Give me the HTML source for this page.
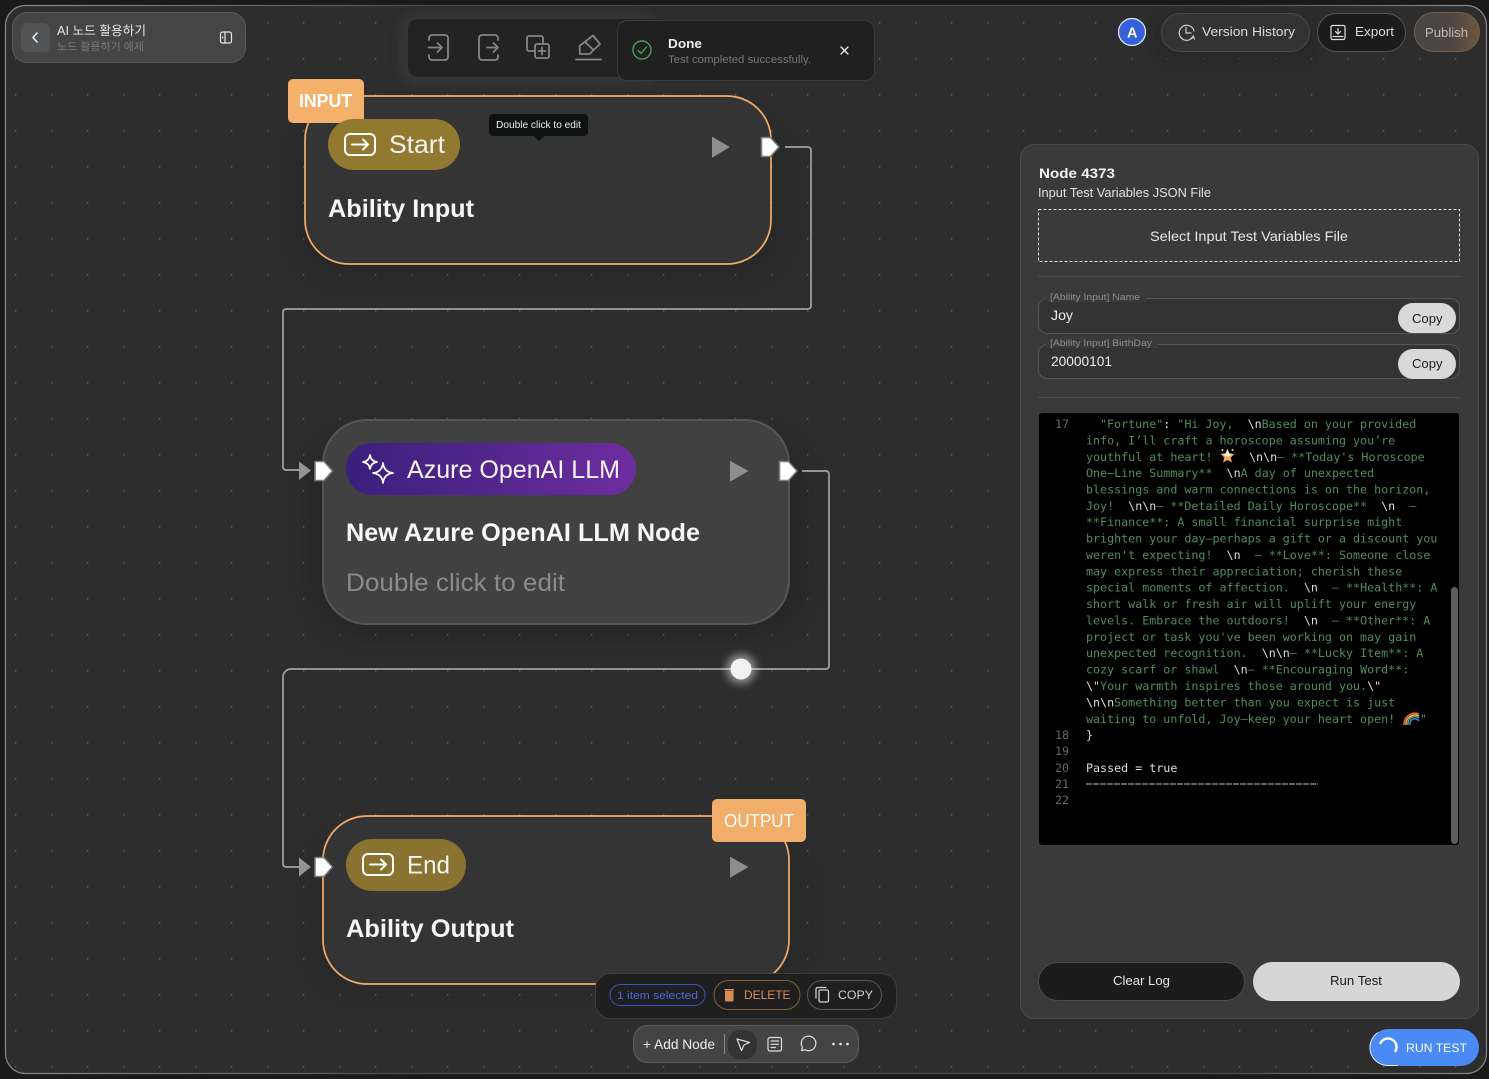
<!DOCTYPE html>
<html><head><meta charset="utf-8"><title>AI 노드 활용하기</title>
<style>
html,body{margin:0;padding:0;background:#1a1a1a;width:1489px;height:1079px;overflow:hidden}
svg{display:block}
text{font-family:"Liberation Sans","Noto Sans CJK KR",sans-serif;white-space:pre}
.m{font-family:"DejaVu Sans Mono","Liberation Mono",monospace;font-size:11.68px;fill:#4f8d5a}
.w{fill:#dedede}
.n{font-family:"DejaVu Sans Mono","Liberation Mono",monospace;font-size:11.68px;fill:#666}
.ic{fill:none;stroke-linecap:round;stroke-linejoin:round}
</style></head><body>
<svg width="1489" height="1079" viewBox="0 0 1489 1079" xmlns="http://www.w3.org/2000/svg">
<defs>
<pattern id="dots" x="15" y="22" width="36" height="36" patternUnits="userSpaceOnUse"><rect x="0" y="0" width="1.4" height="1.4" fill="#626262"/></pattern>
<linearGradient id="fr" x1="0" y1="0" x2="1" y2="0"><stop offset="0" stop-color="#8a8a8a"/><stop offset=".3" stop-color="#484848"/><stop offset=".8" stop-color="#484848"/><stop offset="1" stop-color="#8a8a8a"/></linearGradient>
<linearGradient id="pur" x1="0" y1="0" x2="1" y2="0"><stop offset="0" stop-color="#3a1f7c"/><stop offset="1" stop-color="#6f2d9f"/></linearGradient>
<linearGradient id="pub" x1="0" y1="0" x2="1" y2="0"><stop offset="0" stop-color="#464646"/><stop offset=".55" stop-color="#4d4640"/><stop offset="1" stop-color="#6e5640"/></linearGradient>
<filter id="b10" x="-20%" y="-20%" width="140%" height="140%"><feGaussianBlur stdDeviation="10"/></filter>
<filter id="b4" x="-100%" y="-100%" width="300%" height="300%"><feGaussianBlur stdDeviation="4"/></filter>
</defs>

<!-- frame -->
<rect x="5.5" y="5.5" width="1481" height="1068" rx="20" fill="#2d2d2d" stroke="url(#fr)" stroke-width="1.2"/>
<rect x="6" y="6" width="1480" height="1067" rx="20" fill="url(#dots)"/>

<!-- shadows -->
<rect x="292" y="115" width="495" height="165" rx="50" fill="#000" opacity=".1" filter="url(#b10)"/>
<rect x="308" y="432" width="500" height="205" rx="50" fill="#000" opacity=".14" filter="url(#b10)"/>
<rect x="308" y="830" width="500" height="165" rx="50" fill="#000" opacity=".08" filter="url(#b10)"/>
<rect x="398" y="12" width="260" height="74" rx="20" fill="#383838" opacity=".7" filter="url(#b4)"/>
<rect x="1152" y="10" width="168" height="54" rx="26" fill="#262626" opacity=".6" filter="url(#b4)"/>

<!-- connectors -->
<g fill="none" stroke="#a2a2a2" stroke-width="1.700">
<path d="M785 147H808a3 3 0 0 1 3 3V306a3 3 0 0 1-3 3H286a3 3 0 0 0-3 3V467a3 3 0 0 0 3 3H300"/>
<path d="M802 471H826a3 3 0 0 1 3 3V666a3 3 0 0 1-3 3H291a8 8 0 0 0-8 8V864a3 3 0 0 0 3 3H300"/>
</g>
<path d="M299 461.500L311 470.500L299 480Z" fill="#949494"/>
<path d="M299 857.500L311 867L299 876.500Z" fill="#949494"/>

<!-- node 1 -->
<rect x="305" y="96" width="466" height="168" rx="44" fill="#343434" stroke="#f2ad69" stroke-width="1.700"/>
<rect x="288" y="79" width="76" height="44" rx="5" fill="#f3b16c"/>
<text x="299" y="107" font-size="18" font-weight="700" fill="#fff" textLength="53" lengthAdjust="spacingAndGlyphs">INPUT</text>
<rect x="328" y="119" width="132" height="51" rx="25.5" fill="#917a30"/>
<g class="ic" stroke="#fff" stroke-width="2"><rect x="345" y="134" width="30" height="21" rx="5"/><path d="M352 144.500H368M363 139.500l5 5-5 5"/></g>
<text x="389" y="153" font-size="25" fill="#f4f4f4" textLength="56" lengthAdjust="spacingAndGlyphs">Start</text>
<text x="328" y="217" font-size="25" font-weight="700" fill="#f5f5f5" textLength="146" lengthAdjust="spacingAndGlyphs">Ability Input</text>
<path d="M712.500 137.500L729 147L712.500 157Z" fill="#8e8e8e" stroke="#8e8e8e" stroke-linejoin="round"/>
<path d="M761.500 137.500H770.500L779 147L770.500 156.500H761.500Z" fill="#fff" stroke="#7a7a7a" stroke-width="1.600" stroke-linejoin="round"/>
<rect x="489" y="114" width="99" height="22" rx="4" fill="#0e1210"/>
<path d="M534 136H544L539 141Z" fill="#0e1210"/>
<text x="496" y="128" font-size="9.800" fill="#eee" textLength="85" lengthAdjust="spacingAndGlyphs">Double click to edit</text>

<!-- node 2 -->
<rect x="323" y="420" width="466" height="204" rx="44" fill="#414141" stroke="#565656" stroke-width="2"/>
<rect x="346" y="443" width="290" height="52" rx="26" fill="url(#pur)"/>
<g class="ic" stroke="#fff" stroke-width="1.700" stroke-linejoin="miter">
<path d="M370 455q.8 6 7 7q-6.200 1-7 7q-.8-6-7-7q6.200-1 7-7Z"/>
<path d="M383 463q1 9 10 10q-9 1-10 10q-1-9-10-10q9-1 10-10Z"/></g>
<text x="407" y="478" font-size="25" fill="#f6f6f6" textLength="213" lengthAdjust="spacingAndGlyphs">Azure OpenAI LLM</text>
<text x="346" y="541" font-size="25" font-weight="700" fill="#f8f8f8" textLength="354" lengthAdjust="spacingAndGlyphs">New Azure OpenAI LLM Node</text>
<text x="346" y="591" font-size="25" fill="#8b8b8b" textLength="219" lengthAdjust="spacingAndGlyphs">Double click to edit</text>
<path d="M730.500 461.500L747.500 471L730.500 481Z" fill="#8e8e8e" stroke="#8e8e8e" stroke-linejoin="round"/>
<path d="M315 461.500H324L332.500 471L324 480.500H315Z" fill="#fff" stroke="#7a7a7a" stroke-width="1.600" stroke-linejoin="round"/>
<path d="M779.500 461.500H788.500L797 471L788.500 480.500H779.500Z" fill="#fff" stroke="#7a7a7a" stroke-width="1.600" stroke-linejoin="round"/>
<circle cx="741" cy="669" r="15" fill="#fff" opacity=".45" filter="url(#b4)"/>
<circle cx="741" cy="669" r="10.500" fill="#f2f2f2"/>

<!-- node 3 -->
<rect x="323" y="816" width="466" height="168" rx="44" fill="#343434" stroke="#f2ad69" stroke-width="1.700"/>
<rect x="712" y="799" width="94" height="43" rx="5" fill="#f0ae6a"/>
<text x="724" y="827" font-size="18" fill="#fff" textLength="70" lengthAdjust="spacingAndGlyphs">OUTPUT</text>
<rect x="346" y="839" width="120" height="52" rx="26" fill="#8a7330"/>
<g class="ic" stroke="#fff" stroke-width="2"><rect x="363" y="854" width="30" height="21" rx="5"/><path d="M370 864.500H386M381 859.500l5 5-5 5"/></g>
<text x="407" y="873.500" font-size="25" fill="#f4f4f4" textLength="43" lengthAdjust="spacingAndGlyphs">End</text>
<text x="346" y="937" font-size="25" font-weight="700" fill="#f5f5f5" textLength="168" lengthAdjust="spacingAndGlyphs">Ability Output</text>
<path d="M730.500 857.500L747.500 867L730.500 877Z" fill="#8e8e8e" stroke="#8e8e8e" stroke-linejoin="round"/>
<path d="M315 857.500H324L332.500 867L324 876.500H315Z" fill="#fff" stroke="#7a7a7a" stroke-width="1.600" stroke-linejoin="round"/>

<!-- top-left card -->
<rect x="12.500" y="12.500" width="233" height="50" rx="15" fill="#454545" stroke="#5a5a5a"/>
<rect x="21" y="23" width="29" height="29" rx="6" fill="#525355"/>
<path class="ic" d="M37 33L33 37.500L37 42" stroke="#f0f0f0" stroke-width="1.500"/>
<text x="57" y="35" font-size="12.500" fill="#e6e6e6" textLength="89" lengthAdjust="spacingAndGlyphs">AI 노드 활용하기</text>
<text x="57" y="50" font-size="10.500" fill="#7a7a7a" textLength="87" lengthAdjust="spacingAndGlyphs">노드 활용하기 예제</text>
<g class="ic" stroke="#e6e6e6" stroke-width="1.200"><rect x="220.500" y="32" width="11" height="11" rx="2"/><path d="M225 32V43"/></g>
<rect x="222" y="36.500" width="1.200" height="2" fill="#e6e6e6"/>

<!-- toolbar -->
<rect x="408" y="19" width="260" height="58" rx="10" fill="#232323"/>
<g class="ic" stroke="#858585" stroke-width="1.800">
<path d="M429 40V38a3 3 0 0 1 3-3H445a3 3 0 0 1 3 3V57a3 3 0 0 1-3 3H432a3 3 0 0 1-3-3V55"/><path d="M428.500 47.500H442M437.500 43l4.500 4.500-4.500 4.500"/>
<path d="M498 40V38a3 3 0 0 0-3-3H482a3 3 0 0 0-3 3V57a3 3 0 0 0 3 3H495a3 3 0 0 0 3-3V55"/><path d="M487 47.500H498M493.500 43l4.500 4.500-4.500 4.500"/>
<path d="M534 51H529a2 2 0 0 1-2-2V38a2 2 0 0 1 2-2H541a2 2 0 0 1 2 2V43"/><rect x="535" y="44" width="14" height="14" rx="2"/><path d="M542 47.500V54.500M538.500 51H545.500"/>
<path d="M579.500 46L593 35.500L600 44L589.500 54H580Z"/><path d="M585 42L593.500 50"/><path d="M576 59.500H601"/>
</g>

<!-- toast -->
<rect x="617.500" y="20.500" width="257" height="60" rx="10" fill="#202020" stroke="#3b3b3b"/>
<circle cx="642" cy="50" r="9" fill="none" stroke="#4a9f5c" stroke-width="1.400"/>
<path class="ic" d="M638 50.500l3 3 5.500-6.500" stroke="#4a9f5c" stroke-width="1.300"/>
<text x="668" y="48" font-size="12.500" font-weight="700" fill="#eee" textLength="34" lengthAdjust="spacingAndGlyphs">Done</text>
<text x="668" y="63" font-size="11" fill="#777" textLength="143" lengthAdjust="spacingAndGlyphs">Test completed successfully.</text>
<path class="ic" d="M841 47l7 7M848 47l-7 7" stroke="#eee" stroke-width="1.300"/>

<!-- top right -->
<circle cx="1132" cy="32" r="13.500" fill="#3560d8" stroke="#e8ebf5" stroke-width="1.200"/>
<text x="1127" y="37.500" font-size="14.500" font-weight="700" fill="#fff" textLength="10.500" lengthAdjust="spacingAndGlyphs">A</text>
<rect x="1161.500" y="13.500" width="148" height="38" rx="19" fill="#333" stroke="#4b4b4b"/>
<g class="ic" stroke="#cfcfcf" stroke-width="1.200"><path d="M1193.500 36a7.500 7.500 0 1 1 .5-5"/><path d="M1186 27.500V33H1191M1191 38.500l2.500-2.500 .8 3"/></g>
<text x="1202" y="36" font-size="12.500" fill="#ddd" textLength="93" lengthAdjust="spacingAndGlyphs">Version History</text>
<rect x="1317.500" y="13.500" width="88" height="38" rx="19" fill="#1c1c1c" stroke="#555"/>
<g class="ic" stroke="#ddd" stroke-width="1.200"><rect x="1331" y="25.500" width="14" height="14" rx="1.500"/><path d="M1338 28.500V33.500M1335.500 31.500l2.500 2.500 2.500-2.500M1333 36.500H1343"/></g>
<text x="1355" y="36" font-size="12.500" fill="#ddd" textLength="39" lengthAdjust="spacingAndGlyphs">Export</text>
<rect x="1414.500" y="12.500" width="65" height="39" rx="19.500" fill="url(#pub)" stroke="#7a6048"/>
<text x="1425" y="37" font-size="13" fill="#bdbdbd" textLength="43" lengthAdjust="spacingAndGlyphs">Publish</text>

<!-- panel -->
<rect x="1020.500" y="144.500" width="458" height="874" rx="14" fill="#3a3a3a" stroke="#4b4b4b"/>
<text x="1039" y="178" font-size="14" font-weight="700" fill="#f2f2f2" textLength="76" lengthAdjust="spacingAndGlyphs">Node 4373</text>
<text x="1038" y="197" font-size="12.500" fill="#e2e2e2" textLength="173" lengthAdjust="spacingAndGlyphs">Input Test Variables JSON File</text>
<rect x="1038.500" y="209.500" width="421" height="52" fill="none" stroke="#e0e0e0" stroke-dasharray="3 2"/>
<text x="1150" y="241" font-size="14" fill="#e8e8e8" textLength="198" lengthAdjust="spacingAndGlyphs">Select Input Test Variables File</text>
<path d="M1038 276.500H1460M1038 397.500H1460" stroke="#4c4c4c"/>

<rect x="1038.500" y="298.500" width="421" height="35" rx="9" fill="#333" stroke="#555"/>
<rect x="1046" y="294" width="100" height="8" fill="#3a3a3a"/>
<text x="1050" y="300" font-size="9.500" fill="#8f8f8f" textLength="90" lengthAdjust="spacingAndGlyphs">[Ability Input] Name</text>
<text x="1051" y="320" font-size="14" fill="#eee" textLength="22" lengthAdjust="spacingAndGlyphs">Joy</text>
<rect x="1398" y="303" width="58" height="30" rx="15" fill="#d9d9d9"/>
<text x="1412" y="323" font-size="13" fill="#1c1c1c" textLength="30.500" lengthAdjust="spacingAndGlyphs">Copy</text>

<rect x="1038.500" y="344.500" width="421" height="34" rx="9" fill="#333" stroke="#555"/>
<rect x="1046" y="340" width="112" height="8" fill="#3a3a3a"/>
<text x="1050" y="346" font-size="9.500" fill="#8f8f8f" textLength="102" lengthAdjust="spacingAndGlyphs">[Ability Input] BirthDay</text>
<text x="1051" y="366" font-size="14" fill="#eee" textLength="61" lengthAdjust="spacingAndGlyphs">20000101</text>
<rect x="1398" y="349" width="58" height="30" rx="15" fill="#d9d9d9"/>
<text x="1412" y="368" font-size="13" fill="#1c1c1c" textLength="30.500" lengthAdjust="spacingAndGlyphs">Copy</text>

<!-- log -->
<rect x="1039" y="413" width="420" height="432" rx="3" fill="#000"/>
<text class="n" x="1055" y="428">17</text>
<text class="m" x="1100" y="428">"Fortune"<tspan class="w">:</tspan> "Hi Joy,  <tspan class="w">\n</tspan>Based on your provided</text>
<text class="m" x="1086" y="444.400">info, I’ll craft a horoscope assuming you’re</text>
<text class="m" x="1086" y="460.800">youthful at heart!</text>
<g transform="translate(1227.500 456)"><path d="M0-7L2-2.500L7-2L3.200 1.500L4.500 6.500L0 4L-4.500 6.500L-3.200 1.500L-7-2L-2-2.500Z" fill="#f4a55a"/><path d="M0-7L2-2.500L5-2.200L2 .5H-2L-5-2.200L-2-2.500Z" fill="#f5e6c8"/><circle cx="-5" cy="-6" r="1" fill="#f7d9a8"/><circle cx="5" cy="-6" r="1" fill="#f7d9a8"/></g>
<text class="m" x="1249" y="460.800"><tspan class="w">\n\n</tspan>— **Today's Horoscope</text>
<text class="m" x="1086" y="477.200">One—Line Summary**  <tspan class="w">\n</tspan>A day of unexpected</text>
<text class="m" x="1086" y="493.600">blessings and warm connections is on the horizon,</text>
<text class="m" x="1086" y="510">Joy!  <tspan class="w">\n\n</tspan>— **Detailed Daily Horoscope**  <tspan class="w">\n</tspan>  —</text>
<text class="m" x="1086" y="526.100">**Finance**: A small financial surprise might</text>
<text class="m" x="1086" y="542.500">brighten your day—perhaps a gift or a discount you</text>
<text class="m" x="1086" y="558.900">weren't expecting!  <tspan class="w">\n</tspan>  — **Love**: Someone close</text>
<text class="m" x="1086" y="575.300">may express their appreciation; cherish these</text>
<text class="m" x="1086" y="591.700">special moments of affection.  <tspan class="w">\n</tspan>  — **Health**: A</text>
<text class="m" x="1086" y="608.100">short walk or fresh air will uplift your energy</text>
<text class="m" x="1086" y="624.400">levels. Embrace the outdoors!  <tspan class="w">\n</tspan>  — **Other**: A</text>
<text class="m" x="1086" y="640.800">project or task you've been working on may gain</text>
<text class="m" x="1086" y="657.200">unexpected recognition.  <tspan class="w">\n\n</tspan>— **Lucky Item**: A</text>
<text class="m" x="1086" y="673.500">cozy scarf or shawl  <tspan class="w">\n</tspan>— **Encouraging Word**:</text>
<text class="m" x="1086" y="690"><tspan class="w">\"</tspan>Your warmth inspires those around you.<tspan class="w">\"</tspan></text>
<text class="m" x="1086" y="706.400"><tspan class="w">\n\n</tspan>Something better than you expect is just</text>
<text class="m" x="1086" y="722.800">waiting to unfold, Joy—keep your heart open!</text>
<g fill="none" stroke-width="1.500"><path d="M1404 725a11 11 0 0 1 15-11" stroke="#e8635a"/><path d="M1406 725a9 9 0 0 1 13-9" stroke="#f4b84a"/><path d="M1408 725a7 7 0 0 1 11-7" stroke="#59b36a"/><path d="M1410 725a5 5 0 0 1 9-4" stroke="#4c80d8"/></g>
<text class="m" x="1420" y="722.800">"</text>
<text class="n" x="1055" y="738.800">18</text><text class="m w" x="1086" y="738.800">}</text>
<text class="n" x="1055" y="755.200">19</text>
<text class="n" x="1055" y="771.800">20</text><text class="m w" x="1086" y="771.800">Passed = true</text>
<text class="n" x="1055" y="788">21</text>
<path d="M1086 784H1318" stroke="#c8c8c8" stroke-width="1" stroke-dasharray="6 1"/>
<text class="n" x="1055" y="804.200">22</text>
<rect x="1451" y="587" width="7" height="257" rx="3.500" fill="#5e5e5e"/>

<!-- panel buttons -->
<rect x="1038.500" y="962.500" width="206" height="38" rx="19" fill="#1c1c1c" stroke="#4c4c4c"/>
<text x="1113" y="985" font-size="13" fill="#e6e6e6" textLength="57" lengthAdjust="spacingAndGlyphs">Clear Log</text>
<rect x="1253" y="962" width="207" height="39" rx="19.500" fill="#d6d6d6"/>
<text x="1330" y="985" font-size="13" fill="#1a1a1a" textLength="52" lengthAdjust="spacingAndGlyphs">Run Test</text>

<!-- run test -->
<rect x="1370" y="1029" width="109" height="37" rx="18.500" fill="#4a8af4"/>
<path d="M1378 1032.500a18 18 0 0 0 9 33H1398" fill="none" stroke="#e6eefc" stroke-width="1"/>
<path d="M1380.500 1043a8.500 8.500 0 0 1 15 8" class="ic" stroke="#fff" stroke-width="2.400"/>
<text x="1406" y="1052" font-size="12" fill="#fff" textLength="61" lengthAdjust="spacingAndGlyphs">RUN TEST</text>

<!-- selection bar -->
<rect x="595.500" y="973.500" width="301" height="45" rx="15" fill="#1f1f1f" stroke="#3f3f3f"/>
<rect x="610" y="984.500" width="95" height="21" rx="10.500" fill="none" stroke="#3c55c5"/>
<text x="617" y="999" font-size="11" fill="#4a68dc" textLength="81" lengthAdjust="spacingAndGlyphs">1 item selected</text>
<rect x="714" y="980.500" width="86" height="29" rx="14.500" fill="none" stroke="#7d6330"/>
<path d="M725 991H733.500V1000a1.500 1.500 0 0 1-1.500 1.500H726.500a1.500 1.500 0 0 1-1.500-1.500Z" fill="#d98e5a"/><rect x="724.500" y="989" width="9.500" height="1.500" fill="#d98e5a"/>
<text x="744" y="999" font-size="12" fill="#d98e5a" textLength="46.500" lengthAdjust="spacingAndGlyphs">DELETE</text>
<rect x="807.500" y="980.500" width="74" height="29" rx="14.500" fill="none" stroke="#595959"/>
<g class="ic" stroke="#cfcfcf" stroke-width="1.300"><path d="M816 998V989a1.500 1.500 0 0 1 1.500-1.500H826"/><rect x="819" y="990" width="9.500" height="12" rx="1.500"/></g>
<text x="838" y="999" font-size="12" fill="#cfcfcf" textLength="35" lengthAdjust="spacingAndGlyphs">COPY</text>

<!-- add node bar -->
<rect x="633.500" y="1025.500" width="225" height="37" rx="14" fill="#444" stroke="#5e5e5e"/>
<text x="643" y="1049" font-size="13.500" fill="#eee" textLength="72" lengthAdjust="spacingAndGlyphs">+ Add Node</text>
<path d="M724.500 1034V1054" stroke="#888"/>
<rect x="728" y="1030" width="29" height="29" rx="12" fill="#333"/>
<g class="ic" stroke="#ddd" stroke-width="1.200">
<path d="M737 1039L749.500 1042.500L744 1045L741.500 1050.500Z"/>
<rect x="768" y="1037.500" width="13.500" height="13.500" rx="2"/><path d="M771 1041H778.500M771 1044.300H778.500M771 1047.500H775.500"/>
<path d="M801.500 1050.500L802.500 1047.500a7.300 7.300 0 1 1 2.500 2.300Z"/>
</g>
<circle cx="833.500" cy="1044" r="1.300" fill="#eee"/><circle cx="840.500" cy="1044" r="1.300" fill="#eee"/><circle cx="847.500" cy="1044" r="1.300" fill="#eee"/>
</svg>
</body></html>
